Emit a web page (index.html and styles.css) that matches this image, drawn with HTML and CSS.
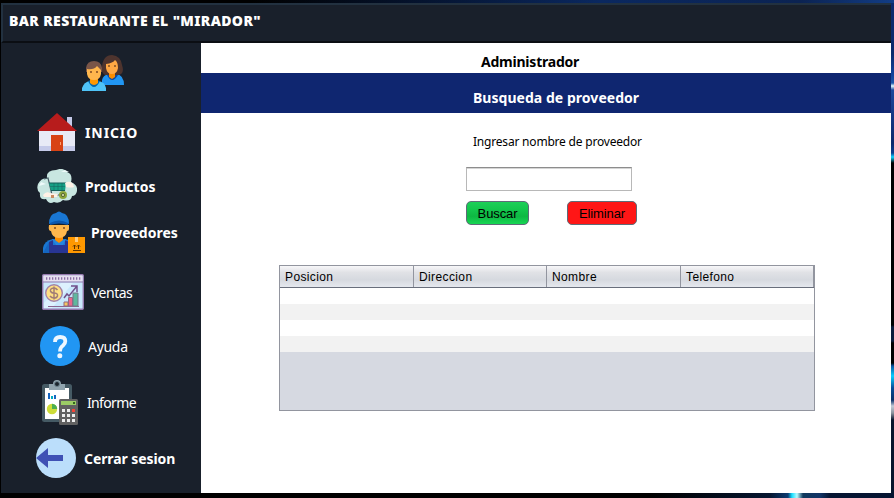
FILE: index.html
```html
<!DOCTYPE html>
<html lang="es">
<head>
<meta charset="utf-8">
<title>Bar Restaurante El Mirador</title>
<link rel="stylesheet" href="styles.css">
</head>
<body>
<div class="window">
  <header class="titlebar"><h1>BAR RESTAURANTE EL "MIRADOR"</h1></header>
  <nav class="sidebar">
    <div class="row users">
      <svg width="42" height="36" viewBox="0 0 42 36">
        <path d="M20 30V25Q21 20 27 19H34Q42 20 42 30Z" fill="#2196f3"/>
        <path d="M23 20Q19 18 20 12Q21 0 30 0Q39 1 40 10Q43 19 36 20Z" fill="#4e342e"/>
        <path d="M25 20Q30 30 36 20Z" fill="#0d47a1"/>
        <path d="M27 16H33V22L30 24L27 22Z" fill="#fb8c00"/>
        <path d="M24 9Q31 8 33 5Q36 7 36 13Q35 19 30 19Q25 19 24 13Z" fill="#ffa844"/>
        <path d="M26 10h2v2h-2zM32 10h2v2h-2z" fill="#a0652a"/>
        <path d="M0 36V33Q2 27 8 26H16Q23 27 24 33V36Z" fill="#4fc3f7"/>
        <path d="M6 26Q12 38 18 26L15 25H9Z" fill="#0266ac"/>
        <path d="M8 23H16V28Q12 32 8 28Z" fill="#ff9800"/>
        <path d="M4 17V13Q5 6 12 6Q19 6 20 13V17Z" fill="#795548"/>
        <path d="M5 14Q12 15 15 11L19 15V19Q18 25 12 25Q6 25 5 19Z" fill="#ffb74d"/>
        <path d="M8 16h2v2H8zM14 16h2v2h-2z" fill="#a0652a"/>
      </svg>
    </div>
    <div class="row home">
      <svg width="40" height="38" viewBox="0 0 40 38">
        <path d="M30 4h5v12h-5z" fill="#c5cae9"/><path d="M2 17h36v21H2z" fill="#e8eaf6"/>
        <path d="M2 33h36v5H2z" fill="#c5cae9"/><path d="M20 0L40 18H0Z" fill="#b71c1c"/>
        <path d="M14 22h12v16H14z" fill="#d84315"/><path d="M23 29h1v3h-1z" fill="#ff9e70"/>
      </svg>
      <span>INICIO</span>
    </div>
    <div class="row products">
      <svg width="40" height="35" viewBox="0 0 40 35">
        <path d="M10 9Q9 1 19 1Q26-2 30 3Q36 5 34 13Q41 16 40 22Q39 27 35 27Q34 33 26 31Q22 35 17 33Q12 36 9 30Q2 31 3 24Q-1 21 1 15Q4 9 10 9Z" fill="#c8e6e1"/>
        <path d="M2 17L9 15L4 13ZM24 3L32 3L28 1Z" fill="#eefafa"/>
        <path d="M7 10L11 9L15 26H26" fill="none" stroke="#455a64" stroke-width="1.2"/>
        <path d="M12 14H29L28 22H14Z" fill="#16a085"/>
        <path d="M12 14H29M14 21.500H28" stroke="#16605b" fill="none"/>
        <path d="M13 17.500H28M17 14v8M21 14v8M25 14v8" stroke="#16605b" stroke-opacity=".5" fill="none"/>
        <path d="M28 14Q33 11 36 15L37 18Q34 19 29 18ZM6 26Q9 22 13 24L21 25L20 28H7Z" fill="#fff1e6"/>
        <path d="M14 26h3v3h-3z" fill="#c98b61"/><circle cx="26" cy="26" r="4" fill="#8da63c"/><circle cx="26" cy="26" r="1.700" fill="#c4c996" stroke="#596c32"/>
      </svg>
      <span>Productos</span>
    </div>
    <div class="row suppliers">
      <svg width="42" height="42" viewBox="0 0 42 42">
        <path d="M0 42V37Q1 30 10 28H22Q30 29 32 36V42Z" fill="#1976d2"/>
        <path d="M6 31L10 29V34H22V29L26 31V42H6Z" fill="#283593"/><path d="M6 31L0 42H6Z" fill="#1565c0"/>
        <path d="M9 28L13 34H20L23 28L16 31Z" fill="#2486df"/>
        <path d="M12 24H20V29L16 32L12 29Z" fill="#fb8c00"/>
        <path d="M6 14H26V18Q26 20 24 20Q23 27 16 27Q9 27 8 20Q5 20 6 14Z" fill="#ffb74d"/>
        <path d="M6 13Q6 3 13 2Q16-1 19 2Q26 3 26 13Q16 9 6 13Z" fill="#1976d2"/>
        <path d="M7 12Q16 7 25 12V14Q16 11 7 14Z" fill="#0d57ae"/>
        <path d="M11 16h2v2h-2zM20 16h2v2h-2z" fill="#a0652a"/>
        <path d="M25 26H42V42H25Z" fill="#ff9800"/><path d="M32 26h3v5h-3z" fill="#ffcc80"/>
        <path d="M30 39.500H38M31.500 38V34M35.500 38V34M30 35.500L31.500 34L33 35.500M34 35.500L35.500 34L37 35.500" fill="none" stroke="#5d3300"/>
      </svg>
      <span>Proveedores</span>
    </div>
    <div class="row sales">
      <svg width="42" height="36" viewBox="0 0 42 36">
        <rect x=".7" y=".7" width="40.6" height="34.6" rx="1" fill="#c9e8fc" stroke="#9579ad" stroke-width="1.4"/>
        <path d="M1.5 1.5h39v6h-39z" fill="#e6dff0"/><path d="M4 4.5H39" stroke="#8b70a4" stroke-width="2.500" stroke-dasharray="1.3 1.7"/>
        <path d="M1 8H41" stroke="#9579ad"/><path d="M19 9H31L10 34H2V29Z" fill="#e8f6ff" opacity=".65"/>
        <path d="M6 32.5H37" stroke="#8a6691"/>
        <path d="M22 28h4v4h-4z" fill="#f5c763" stroke="#936b83"/><path d="M26.500 23.500h4v8.500h-4z" fill="#ed668c" stroke="#936b83"/><path d="M31 19h5v13h-5z" fill="#5eb99e" stroke="#78778b"/>
        <path d="M22 24L25 20L27 22L35 12M29 12H35V18" fill="none" stroke="#71508a" stroke-width="1.5"/>
        <circle cx="12" cy="19" r="8.3" fill="#ffdf83" stroke="#a283a7" stroke-width="1.4"/>
        <path d="M15.5 16Q14 14 11.5 14Q8 14.500 8.500 17Q9 19 12 19Q16 19 15.500 22Q15 24 12 24Q9.500 24 8 22M12 12.500V25.500" fill="none" stroke="#a27d75" stroke-width="1.5"/>
      </svg>
      <span>Ventas</span>
    </div>
    <div class="row help">
      <svg width="40" height="40" viewBox="0 0 40 40">
        <circle cx="20" cy="20" r="20" fill="#2196f3"/>
        <path d="M15 16Q15 11 20.200 11Q25.300 11 25.300 15.200Q25.300 17.500 23 19.500Q20 21.500 20 25.500" fill="none" stroke="#eef7ff" stroke-width="3.800"/>
        <circle cx="19.800" cy="29.700" r="2.500" fill="#eef7ff"/>
      </svg>
      <span>Ayuda</span>
    </div>
    <div class="row report">
      <svg width="36" height="45" viewBox="0 0 36 45">
        <rect x="0" y="4" width="30" height="38" rx="2.500" fill="#455a64"/>
        <path d="M3 8H27V39H3Z" fill="#fff"/>
        <path d="M7 4H11Q11 0 15 0Q19 0 19 4H23V10H7Z" fill="#90a4ae"/><circle cx="15" cy="4" r="2.500" fill="#1b252d" stroke="#6c8490"/>
        <path d="M6 13h2v6H6zM12 15h2v4h-2z" fill="#1565c0"/><path d="M9 16h2v3H9z" fill="#00acc1"/>
        <circle cx="10" cy="29" r="5.200" fill="#cddc39"/><path d="M10 29V23.800A5.200 5.200 0 0 1 15.200 29Z" fill="#4caf50"/>
        <rect x="17" y="19" width="19" height="26" rx="1.500" fill="#616161"/><path d="M19 21h15v4H19z" fill="#9ccc65"/><path d="M31 22h2v2h-2z" fill="#33691e"/>
        <path d="M20 29h3v3h-3zM25 29h3v3h-3zM20 34h3v3h-3zM25 34h3v3h-3zM30 34h3v3h-3zM20 39h3v3h-3zM25 39h3v3h-3zM30 39h3v3h-3z" fill="#eee"/><path d="M30 29h3v3h-3z" fill="#f44336"/>
      </svg>
      <span>Informe</span>
    </div>
    <div class="row logout">
      <svg width="40" height="40" viewBox="0 0 40 40"><circle cx="20" cy="20" r="20" fill="#bbdefb"/><path d="M0 20L12 10V17H27V23H12V30Z" fill="#3f51b5"/></svg>
      <span>Cerrar sesion</span>
    </div>
  </nav>
  <main class="content">
    <p class="role">Administrador</p>
    <h2 class="heading">Busqueda de proveedor</h2>
    <form class="search">
      <label for="name">Ingresar nombre de proveedor</label>
      <input id="name" type="text">
      <div class="actions">
        <button type="button" class="find">Buscar</button>
        <button type="button" class="remove">Eliminar</button>
      </div>
    </form>
    <div class="table">
      <div class="thead"><span>Posicion</span><span>Direccion</span><span>Nombre</span><span>Telefono</span></div>
      <div class="line"></div><div class="line"></div><div class="line"></div><div class="line"></div>
    </div>
  </main>
</div>
</body>
</html>
```
FILE: styles.css
```css
* { box-sizing: border-box; }
body {
  margin: 0;
  width: 894px;
  height: 498px;
  padding: 3px 3px 5px 1px;
  overflow: hidden;
  background:
    linear-gradient(180deg, #0b2a6c 0 50px, #134199 70px, #1c55a8 80px, #e0faff 83px, #1b489c 87px, #0c286c 140px, #0b3e90 150px, #10d5ff 154px, #000 160px 322px, #0b1c3c 324px 338px, #000 340px 360px, #0753a0 363px, #08cfff 373px, #064c98 385px, #0a2f68 397px, #c3cbd7 403px, #8b939e 410px, #07152d 417px 490px) right 3px / 3px 490px no-repeat,
    linear-gradient(90deg, #000 0 250px, #0a2860 600px, #0b2352 800px, #123d86) left top / 894px 3px no-repeat,
    linear-gradient(90deg, #000 0 650px, #061630 770px, #0b3a70 788px, #19dfff 792px, #b7fbff 797px, #10385c 803px, #123466 820px, #061532 830px) left bottom / 894px 5px no-repeat,
    #000;
  font-family: "Noto Sans", sans-serif;
}
.window {
  display: grid;
  grid-template: 40px 450px / 200px 690px;
}
.titlebar {
  grid-column: 1 / -1;
  display: flex;
  align-items: center;
  padding: 0 0 4px 6px;
  background: #19202b;
  border-top: 2px solid #223140;
  border-left: 2px solid #223140;
  border-bottom: 2px solid #0b0e13;
}
h1 {
  margin: 0;
  color: #fff;
  font-size: 14px;
  font-weight: 900;
  line-height: 20px;
  letter-spacing: .38px;
}
.sidebar { background: #19202b; color: #fff; }
.row {
  display: flex;
  align-items: center;
  font-size: 14px;
  line-height: 20px;
  white-space: nowrap;
}
.row svg { flex: none; }
.row span { padding-top: 2px; }
.users { height: 60px; padding-left: 81px; }
.home { height: 58px; padding-left: 36px; gap: 8px; font-weight: 700; letter-spacing: .9px; }
.products { height: 50px; padding-left: 36px; gap: 8px; font-weight: 700; }
.suppliers { height: 42px; padding-left: 42px; gap: 6px; font-weight: 700; }
.sales { height: 56px; margin-top: 11px; padding-left: 41px; gap: 7px; letter-spacing: -.5px; }
.help { height: 52px; padding-left: 39px; gap: 8px; letter-spacing: -.3px; }
.report { height: 60px; padding-left: 41px; gap: 9px; letter-spacing: -.65px; }
.logout { height: 52px; padding-left: 35px; gap: 8px; font-weight: 700; letter-spacing: -.08px; }
.content { background: #fff; color: #000; }
.role, .heading {
  margin: 0;
  font-size: 14px;
  font-weight: 700;
  line-height: 20px;
}
.role { height: 30px; padding: 9px 0 0 280px; letter-spacing: -.22px; }
.heading { height: 40px; padding: 15px 0 0 272px; background: #0f2670; color: #fff; letter-spacing: .04px; }
.search { display: flex; flex-direction: column; padding-left: 265px; }
.search label {
  height: 54px;
  padding: 19px 0 0 7px;
  font-size: 12px;
  line-height: 20px;
  letter-spacing: -.2px;
}
.search input {
  width: 166px;
  height: 24px;
  border: 1px solid #b8b8b8;
  border-top-color: #8d8d8d;
  box-shadow: inset 0 1px #d5d5d5;
  background: #fff;
}
.actions { display: flex; gap: 38px; margin-top: 10px; }
.actions button {
  height: 24px;
  padding: 2px 0 0;
  border: 1px solid #5f6b78;
  border-radius: 5px;
  color: #000;
  font: 13px/20px "Liberation Sans", sans-serif;
  letter-spacing: -.1px;
}
.find { width: 63px; background: linear-gradient(#1ccf58, #13c64d 35%, #0eb843 65%, #17d653); }
.remove { width: 70px; background: #ff1616; }
.table {
  width: 536px;
  height: 146px;
  margin: 40px 0 0 78px;
  border: 1px solid #92959f;
  background: #d6d9e1;
}
.thead {
  display: grid;
  grid-template-columns: 134px 133px 134px 133px;
  height: 22px;
  border-bottom: 1px solid #696f7c;
  background: linear-gradient(#f7f7f9, #e1e2e6 30%, #d6d9df 65%, #e5e8ee);
  font: 12px/23px "Liberation Sans", sans-serif;
  letter-spacing: .38px;
}
.thead span { height: 21px; padding-left: 5px; border-right: 1px solid #92959f; }
.line { height: 16px; background: #fff; }
.line:nth-child(odd) { background: #f2f2f2; }
```
